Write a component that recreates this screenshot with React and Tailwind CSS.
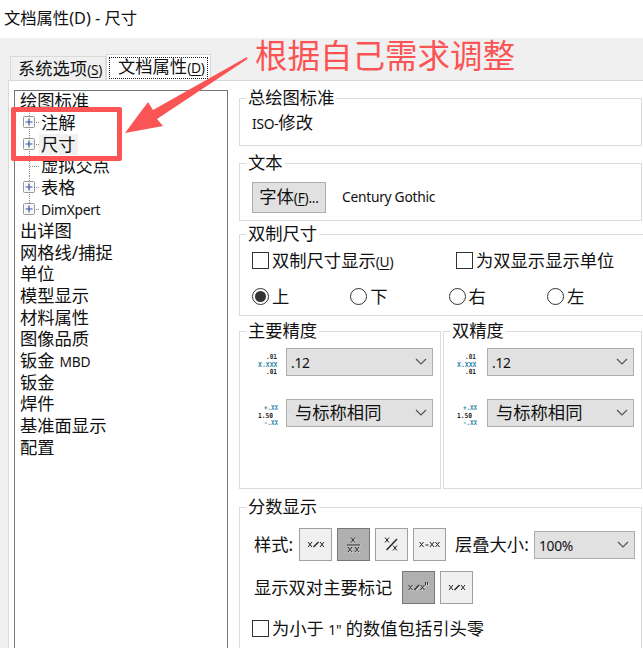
const treeItems = [
  { label: "绘图标准" },
  { label: "注解", child: true, expandable: true },
  { label: "尺寸", child: true, expandable: true, selected: true },
  { label: "虚拟交点", child: true },
  { label: "表格", child: true, expandable: true },
  { latin: "DimXpert", child: true, expandable: true, last: true },
  { label: "出详图" },
  { label: "网格线/捕捉" },
  { label: "单位" },
  { label: "模型显示" },
  { label: "材料属性" },
  { label: "图像品质" },
  { label: "钣金", latin: "MBD" },
  { label: "钣金" },
  { label: "焊件" },
  { label: "基准面显示" },
  { label: "配置" },
];

const positions = ["上", "下", "右", "左"];

// Small latin text next to the larger Chinese text
function Latin({ children, className = "" }) {
  return <span className={`text-[13.8px] tracking-[-0.28px] ${className}`}>{children}</span>;
}

function Hotkey({ letter }) {
  return (
    <Latin>
      (<span className="underline underline-offset-2">{letter}</span>)
    </Latin>
  );
}

function TreeBranch({ expandable, last }) {
  return (
    <svg width="20" height="22" viewBox="0 0 20 22" className="shrink-0">
      <path d={last ? "M8.5 0V11" : "M8.5 0V22"} stroke="#8a8a8a" strokeDasharray="1 1" />
      <path d="M9 11.5H19" stroke="#8a8a8a" strokeDasharray="1 1" />
      {expandable && (
        <>
          <rect x="2.5" y="5.5" width="11" height="11" rx="1" fill="#f8f8f8" stroke="#989898" />
          <path d="M4.5 11H11.5M8 7.5V14.5" stroke="#3a50a0" strokeWidth="1.2" />
        </>
      )}
    </svg>
  );
}

function TreeItem({ item }) {
  return (
    <div className={`flex h-[21.65px] items-center leading-[21px] ${item.child ? "pl-[6px]" : "pl-[5px]"}`}>
      {item.child && <TreeBranch expandable={item.expandable} last={item.last} />}
      <span className={item.selected ? "-ml-[2px] bg-[#f0f0f0] px-[2px]" : ""}>
        {item.label}
        {item.latin && <Latin className={item.label ? "ml-[5px]" : ""}>{item.latin}</Latin>}
      </span>
    </div>
  );
}

function Group({ title, className = "", children }) {
  return (
    <fieldset className={`shrink-0 border border-[#dcdcdc] ${className}`}>
      <legend className="ml-[6px] h-[22px] px-[2px] leading-[22px]">{title}</legend>
      {children}
    </fieldset>
  );
}

function Checkbox({ children }) {
  return (
    <label className="flex items-center gap-[3px]">
      <span className="size-[17px] border border-[#333] bg-white" />
      <span>{children}</span>
    </label>
  );
}

function Radio({ label, checked }) {
  return (
    <label className="flex w-[98.3px] items-center gap-[3px]">
      <span className="flex size-[17px] items-center justify-center rounded-full border border-[#333]">
        {checked && <span className="size-[11px] rounded-full bg-[#333]" />}
      </span>
      <span>{label}</span>
    </label>
  );
}

function Select({ children, className = "" }) {
  return (
    <div className={`flex h-[28px] items-center justify-between border border-[#adadad] bg-[#e1e1e1] pr-[5px] ${className}`}>
      <span>{children}</span>
      <svg width="12" height="8" viewBox="0 0 12 8" fill="none">
        <path d="M1 1L6 6L11 1" stroke="#555" strokeWidth="1.2" />
      </svg>
    </div>
  );
}

function PrecisionIcon() {
  return (
    <svg width="22" height="28" viewBox="0 0 22 28" className="overflow-visible font-['DejaVu_Sans_Mono',monospace] text-[7px] font-bold">
      <text x="8" y="11" textLength="11" lengthAdjust="spacingAndGlyphs" fill="#333">.01</text>
      <text x="0" y="18.500" textLength="19.500" lengthAdjust="spacingAndGlyphs" fill="#2b85a8">X.XXX</text>
      <text x="8" y="26" textLength="11" lengthAdjust="spacingAndGlyphs" fill="#222">.01</text>
    </svg>
  );
}

function ToleranceIcon() {
  return (
    <svg width="22" height="28" viewBox="0 0 22 28" className="overflow-visible font-['DejaVu_Sans_Mono',monospace] text-[7px] font-bold">
      <text x="6" y="11" textLength="14" lengthAdjust="spacingAndGlyphs" fill="#2b85a8">+.XX</text>
      <text x="0" y="18.500" textLength="15" lengthAdjust="spacingAndGlyphs" fill="#222">1.50</text>
      <text x="6" y="26" textLength="14" lengthAdjust="spacingAndGlyphs" fill="#2b85a8">-.XX</text>
    </svg>
  );
}

function PrecisionGroup({ title, className, iconClass }) {
  return (
    <Group title={title} className={`h-[169px] ${className}`}>
      <div className="flex flex-col gap-[23px] pt-[6px] pr-[7px]">
        <div className="flex items-center justify-between">
          <span className={iconClass}><PrecisionIcon /></span>
          <Select className="w-[147px] pl-[4px]"><Latin>.12</Latin></Select>
        </div>
        <div className="flex items-center justify-between">
          <span className={iconClass}><ToleranceIcon /></span>
          <Select className="w-[147px] pl-[8px]">与标称相同</Select>
        </div>
      </div>
    </Group>
  );
}

const X = ({ x, y }) => <path d={`M${x} ${y}l4 5M${x + 4} ${y}l-4 5`} />;

const fractionIcons = {
  inline: (
    <>
      <X x={9} y={14} />
      <X x={21} y={14} />
      <path d="M14.500 19L19.500 14" strokeWidth="1.5" />
    </>
  ),
  stacked: (
    <>
      <X x={14} y={9.5} />
      <path d="M10 17H23" />
      <X x={11} y={19} />
      <X x={18} y={19} />
    </>
  ),
  diagonal: (
    <>
      <X x={10} y={9.5} />
      <path d="M11.500 22L22 11" strokeWidth="1.4" />
      <X x={18} y={17.5} />
    </>
  ),
  dash: (
    <>
      <X x={6.5} y={14} />
      <path d="M12.500 17H15.500" />
      <X x={17} y={14} />
      <X x={22.5} y={14} />
    </>
  ),
  marked: (
    <>
      <X x={6.5} y={14} />
      <path d="M12.500 19L17 14" strokeWidth="1.5" />
      <X x={18.5} y={14} />
      <path d="M23.500 11V14M25.500 11V14" />
    </>
  ),
};

function FractionButton({ icon, active }) {
  return (
    <button
      className={`size-[33px] border ${active ? "border-[#777] bg-[#b0b0b0]" : "border-[#a0a0a0] bg-[#f0f0f0]"}`}
    >
      <svg width="31" height="31" viewBox="1 1 31 31" fill="none" stroke={active ? "#333" : "#222"}>
        {active && <g stroke="#d6d6d6" transform="translate(1 1)">{fractionIcons[icon]}</g>}
        {fractionIcons[icon]}
      </svg>
    </button>
  );
}

function Callout() {
  return (
    <>
      <div className="absolute top-[107px] left-[11px] h-[54px] w-[111px] rounded-[2px] border-[5px] border-[#fb5454]" />
      <svg className="absolute top-[50px] left-[120px]" width="130" height="90" viewBox="120 50 130 90">
        <path d="M125 133L148 102L153 110L247 57L247.500 59L157 119L163 126Z" fill="#fb5454" />
      </svg>
      <div className="absolute top-[35px] left-[255px] text-[32.5px] leading-[42px] whitespace-nowrap text-[#fb5454]">
        根据自己需求调整
      </div>
    </>
  );
}

function App() {
  return (
    <div className="relative flex h-[648px] w-[643px] flex-col overflow-hidden bg-[#f0f0f0] font-['Noto_Sans','Noto_Sans_CJK_SC',sans-serif] text-[17.3px] whitespace-nowrap text-[#111]">
      <header className="h-[38px] bg-white pl-[4px] text-[16.3px] leading-[36px]">文档属性(D) - 尺寸</header>

      {/* 选项卡 */}
      <nav className="flex h-[42px] items-end pl-[10px]">
        <div className="h-[24px] w-[96px] border border-b-0 border-[#d9d9d9] pl-[7px] leading-[24px]">
          系统选项<Hotkey letter="S" />
        </div>
        <div className="h-[26px] w-[105px] border border-b-0 border-[#d9d9d9] bg-white p-[2px] pb-[1px]">
          <div className="h-full border border-dotted border-[#222] pl-[8px] leading-[17px]">
            文档属性<Hotkey letter="D" />
          </div>
        </div>
      </nav>

      <main className="ml-[8px] flex min-h-0 flex-1 border-t border-l border-[#d9d9d9] bg-white">
        {/* 左侧目录 */}
        <aside className="mt-[9px] ml-[5px] h-[570px] w-[214px] shrink-0 border border-[#777] bg-white">
          <div className="-mt-px">
            {treeItems.map((item, i) => (
              <TreeItem key={i} item={item} />
            ))}
          </div>
        </aside>

        <section className="ml-[11px] flex w-[403px] shrink-0 flex-col pt-[6px]">
          <Group title="总绘图标准" className="h-[59px]">
            <div className="pl-[12px] leading-[28px]"><Latin>ISO-</Latin>修改</div>
          </Group>

          <Group title="文本" className="mt-[6px] h-[69px]">
            <div className="flex items-center gap-[16px] pt-[8px] pl-[12px]">
              <button className="h-[31px] w-[74px] border border-[#adadad] bg-[#e1e1e1] leading-[26px]">
                字体<Hotkey letter="F" /><Latin>...</Latin>
              </button>
              <Latin>Century Gothic</Latin>
            </div>
          </Group>

          <Group title="双制尺寸" className="mt-[2px] h-[93px] w-[402px]">
            <div className="flex items-center pt-[3px] pl-[12px]">
              <div className="w-[204px]">
                <Checkbox>双制尺寸显示<Hotkey letter="U" /></Checkbox>
              </div>
              <Checkbox>为双显示显示单位</Checkbox>
            </div>
            <div className="mt-[10px] flex pl-[12px]">
              {positions.map((p, i) => (
                <Radio key={p} label={p} checked={i === 0} />
              ))}
            </div>
          </Group>

          <div className="mt-[4px] flex shrink-0 gap-[2px]">
            <PrecisionGroup title="主要精度" className="w-[202px]" iconClass="pl-[18px]" />
            <PrecisionGroup title="双精度" className="w-[199px]" iconClass="pl-[13px]" />
          </div>

          <Group title="分数显示" className="mt-[7px] h-[200px]">
            <div className="flex items-center pt-[10px] pl-[14px]">
              <span className="w-[45px]">样式:</span>
              <div className="flex gap-[5px]">
                <FractionButton icon="inline" />
                <FractionButton icon="stacked" active />
                <FractionButton icon="diagonal" />
                <FractionButton icon="dash" />
              </div>
              <span className="ml-[9px] w-[79px]">层叠大小:</span>
              <Select className="w-[101px] pl-[4px]"><Latin>100%</Latin></Select>
            </div>
            <div className="flex items-center pt-[10px] pl-[14px]">
              <span className="w-[148px]">显示双对主要标记</span>
              <div className="flex gap-[5px]">
                <FractionButton icon="marked" active />
                <FractionButton icon="inline" />
              </div>
            </div>
            <div className="pt-[12px] pl-[12px]">
              <Checkbox>为小于 <Latin>1"</Latin> 的数值包括引头零</Checkbox>
            </div>
          </Group>
        </section>
      </main>

      <Callout />
    </div>
  );
}

export default App;
